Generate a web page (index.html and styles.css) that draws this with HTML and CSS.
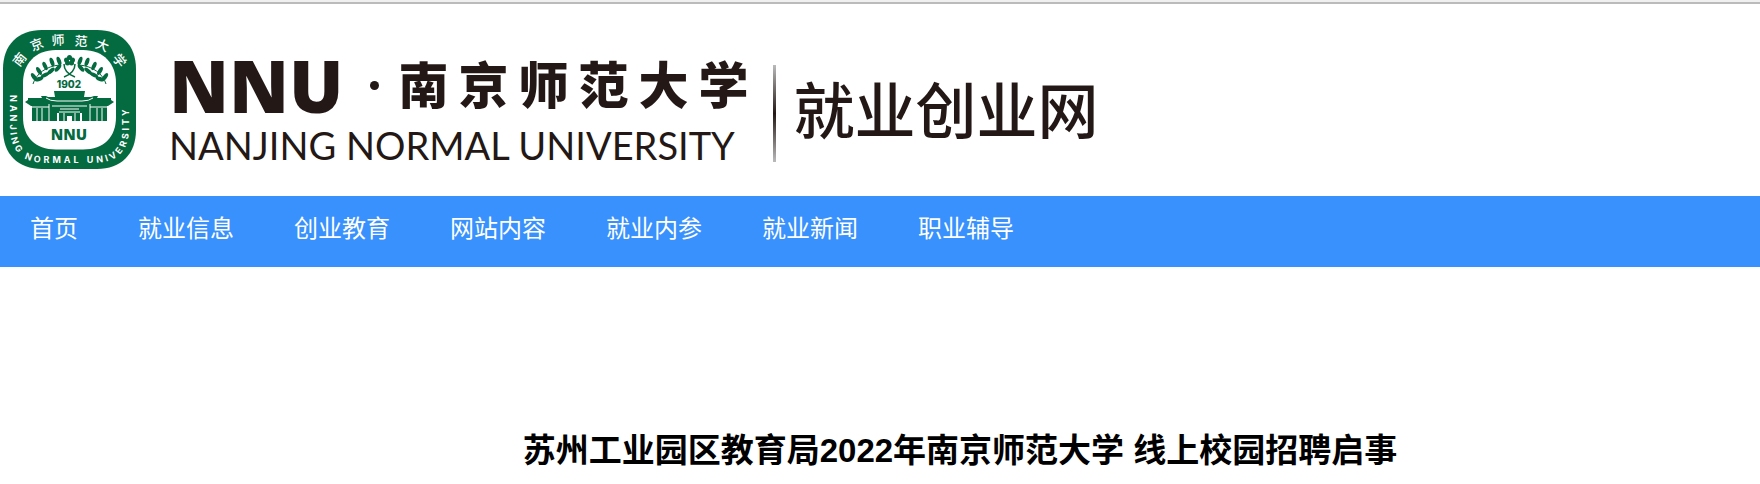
FILE: index.html
```
<!DOCTYPE html>
<html lang="zh-CN">
<head>
    <meta charset="utf-8">
    <title>南京师范大学就业创业网</title>
    <link rel="stylesheet" href="styles.css">
</head>
<body>
    <div class="topLine"></div>
    <header class="header">
        <svg class="emblem" width="133" height="139" viewBox="3 30 133 139" role="img" aria-label="南京师范大学校徽">
            <path fill="#046a3f" d="M42 30H97C121 30 136 45 136 69V130C136 154 121 169 97 169H42C18 169 3 154 3 130V69C3 45 18 30 42 30Z"/>
            <path fill="#fff" d="M56 50H83C104 50 116 64 116 83V117C116 137 104 149.500 83 149.500H56C35 149.500 23 137 23 117V83C23 64 35 50 56 50Z"/>
            <g class="ringHan">
                <text transform="translate(20 60) rotate(-52)" y="4">南</text>
                <text transform="translate(37 45) rotate(-22)" y="4">京</text>
                <text transform="translate(58 41) rotate(-3)" y="4">师</text>
                <text transform="translate(81 42) rotate(4)" y="4">范</text>
                <text transform="translate(102 46) rotate(22)" y="4">大</text>
                <text transform="translate(119 61) rotate(52)" y="4">学</text>
            </g>
            <path id="ring" fill="none" d="M10 95V128C10 150 22 162.500 42 162.500H97C117 162.500 129 150 129 128V84"/>
            <text class="ringLatin"><textPath href="#ring">NANJING NORMAL UNIVERSITY</textPath></text>
            <g id="branch" fill="#046a3f">
                <path fill="none" stroke="#046a3f" d="M33 84C36 74 46 66 60 65"/>
                <path fill="none" stroke="#046a3f" stroke-width="1.500" d="M64 64Q64 73 75 77"/>
                <ellipse cx="34" cy="77" rx="2" ry="4.500" transform="rotate(-35 34 77)"/>
                <ellipse cx="39" cy="71" rx="2" ry="4.500" transform="rotate(-30 39 71)"/>
                <ellipse cx="45" cy="66" rx="2" ry="4.500" transform="rotate(-25 45 66)"/>
                <ellipse cx="52" cy="62" rx="2" ry="4.500" transform="rotate(-20 52 62)"/>
                <ellipse cx="59" cy="61" rx="2" ry="4.500" transform="rotate(-20 59 61)"/>
                <ellipse cx="39" cy="79" rx="2" ry="4.500" transform="rotate(70 39 79)"/>
                <ellipse cx="45" cy="75" rx="2" ry="4.500" transform="rotate(65 45 75)"/>
                <ellipse cx="51" cy="71" rx="2" ry="4.500" transform="rotate(50 51 71)"/>
                <ellipse cx="58" cy="68" rx="2" ry="4.500" transform="rotate(40 58 68)"/>
            </g>
            <use href="#branch" transform="translate(139 0) scale(-1 1)"/>
            <g fill="#046a3f">
                <circle cx="69.500" cy="57.500" r="2.500"/><circle cx="66.500" cy="60" r="2.500"/><circle cx="72.500" cy="60" r="2.500"/>
                <circle cx="67.500" cy="63" r="2.500"/><circle cx="71.500" cy="63" r="2.500"/>
            </g>
            <text class="year" x="69" y="88">1902</text>
            <g fill="#046a3f">
                <path d="M54 91H85L84 97H91L94 96H98L97 98H111V100L114 102L108 106H31L25 102L28 100V98H42L41 96H46L48 97H55Z"/>
                <path d="M32 106H107V121H32Z"/>
            </g>
            <g fill="none" stroke="#fff">
                <path d="M46 98Q50 101 57 101H82Q89 101 93 98M49 104V121M90 104V121M37 108V121M42 108V121M97 108V121M102 108V121M32 107H49M90 107H107M52 106H87"/>
                <path d="M59 112H80M64 113V121M75 113V121M60 109H79"/>
                <path stroke-width="2" d="M58 113V121M81 113V121"/>
                <path stroke-width="5" d="M69.500 116V121"/>
            </g>
            <text class="emblemName" x="69" y="140">NNU</text>
        </svg>
        <div class="school">
            <div class="schoolTop">
                <span class="abbr">NNU</span>
                <span class="dot"></span>
                <div class="schoolName"><span>南</span><span>京</span><span>师</span><span>范</span><span>大</span><span>学</span></div>
            </div>
            <div class="schoolLatin">NANJING NORMAL UNIVERSITY</div>
        </div>
        <div class="divider"></div>
        <div class="siteName">就业创业网</div>
    </header>
    <nav class="nav">
        <a href="#">首页</a>
        <a href="#">就业信息</a>
        <a href="#">创业教育</a>
        <a href="#">网站内容</a>
        <a href="#">就业内参</a>
        <a href="#">就业新闻</a>
        <a href="#">职业辅导</a>
    </nav>
    <main class="article">
        <h1 class="articleTitle">苏州工业园区教育局2022年南京师范大学 线上校园招聘启事</h1>
    </main>
</body>
</html>
```
FILE: styles.css
```
*{
    margin: 0;
    padding: 0;
    box-sizing: border-box;
}
body{
    background: #fff;
    font-family: "Liberation Sans", "Noto Sans CJK SC", sans-serif;
}
.topLine{
    height: 4px;
    background: #f0f0f0;
    border-bottom: 2px solid #bbb;
}
.header{
    display: flex;
    align-items: flex-start;
    height: 192px;
    padding: 26px 3px;
    color: #231815;
}
.emblem{
    flex: none;
}
.ringHan{
    fill: #fff;
    font: 500 13px "Noto Sans CJK SC", sans-serif;
    text-anchor: middle;
}
.ringLatin{
    fill: #fff;
    font: 700 9px Inter, sans-serif;
    letter-spacing: 3px;
}
.year{
    fill: #046a3f;
    font: 800 10px Inter, sans-serif;
    text-anchor: middle;
}
.emblemName{
    fill: #046a3f;
    font: 800 15px "Open Sans", sans-serif;
    text-anchor: middle;
}
.school{
    margin-left: 33px;
    padding-top: 24px;
    white-space: nowrap;
}
.schoolTop{
    display: flex;
    align-items: center;
    height: 62px;
}
.abbr{
    font: 800 72px/64px "Open Sans", sans-serif;
}
.dot{
    width: 9px;
    height: 9px;
    margin: 0 20px 0 26px;
    border-radius: 50%;
    background: #231815;
}
.schoolName{
    display: flex;
    gap: 10px;
    padding-bottom: 6px;
    font: 900 50px/56px "Noto Sans CJK SC", sans-serif;
}
.schoolLatin{
    padding-top: 6px;
    font: 38px/46px Lato, sans-serif;
}
.divider{
    width: 3px;
    height: 97px;
    margin: 35px 18px 0 24px;
    background: linear-gradient(#bbb, #231815 50%, #bbb);
}
.siteName{
    padding-top: 33px;
    font: 500 61px/90px "Noto Sans CJK SC", sans-serif;
    white-space: nowrap;
}
.nav{
    display: flex;
    height: 71px;
    background: #3891fc;
}
.nav a{
    padding: 0 30px;
    color: #fff;
    font-size: 24px;
    line-height: 66px;
    text-decoration: none;
    white-space: nowrap;
}
.article{
    padding: 162px 0 0 160px;
}
.articleTitle{
    color: #000;
    font-size: 33px;
    line-height: 44px;
    text-align: center;
}
```
